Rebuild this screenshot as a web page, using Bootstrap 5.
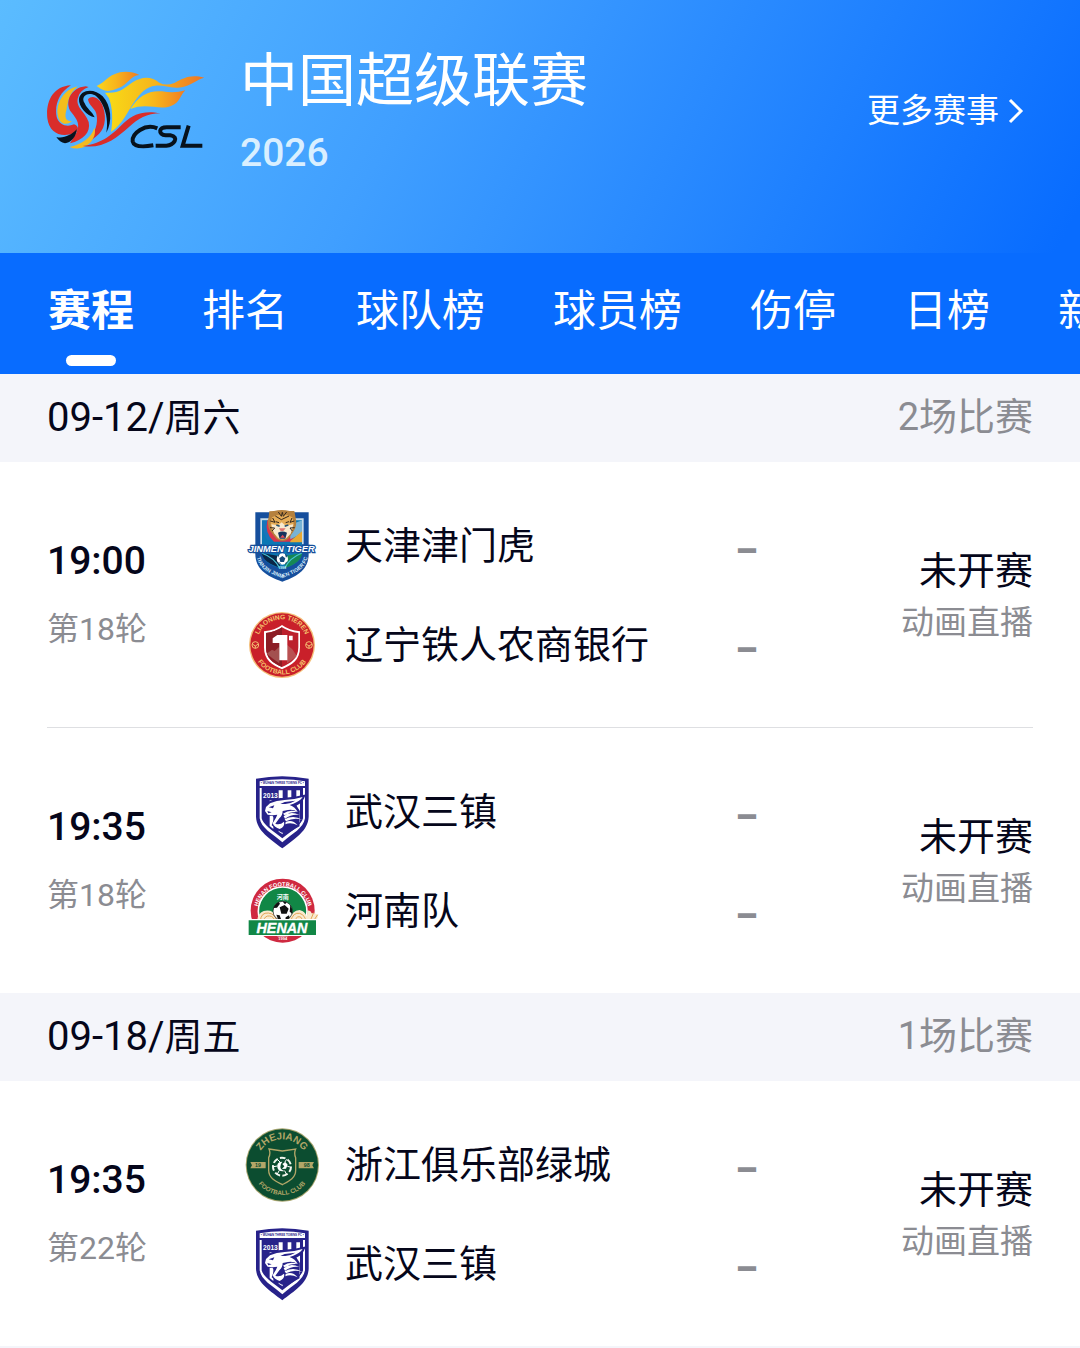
<!DOCTYPE html>
<html lang="zh-CN">
<head>
<meta charset="utf-8">
<meta name="viewport" content="width=device-width, initial-scale=1">
<title>中国超级联赛 2026 赛程</title>
<link href="https://cdn.jsdelivr.net/npm/bootstrap@5.3.0/dist/css/bootstrap.min.css" rel="stylesheet">
<style>
:root{--ink:#05061a;--soft:#8b8c92;--band:#f4f5fa;--brand:#086cff}
body{font-family:Roboto,"Noto Sans CJK SC",sans-serif;color:var(--ink);background:#fff}
a{color:inherit;text-decoration:none}
.league-head{padding:39px 56px 70px 47px;background:linear-gradient(118deg,#5bbcff 0%,#409fff 38%,#086cff 98%);color:#fff}
.league-logo{width:160px;height:82px;margin-right:33px}
.league-title{font-size:58px;line-height:84px;font-weight:400;margin:0}
.league-year{font-size:39px;line-height:60px;font-weight:500;color:#d9efff}
.more-link{font-size:33px;line-height:40px;gap:9px}
.more-link svg{width:16px;height:26px}
.tab-strip{background:var(--brand);padding:26px 47px 8px 48px;gap:68px;overflow-x:auto;scrollbar-width:none}
.tab-strip::-webkit-scrollbar{display:none}
.tab-strip a{color:#fff;font-size:43px;line-height:64px;white-space:nowrap}
.tab-strip a::after{content:"";display:block;width:50px;height:11px;border-radius:6px;margin:12px auto 0}
.tab-strip a.active{font-weight:700}
.tab-strip a.active::after{background:#fff}
.day-bar{background:var(--band);height:88px;padding:0 47px;font-size:38px;font-weight:400;margin:0}
.day-bar time{font-size:40px}
.soft{color:var(--soft)}
.matches{padding:0 47px}
.match{padding:34px 0 33px}
.match + .match{border-top:1px solid #dedfe2}
.when{width:198px;padding-bottom:6px}
.kick{font-size:39px;line-height:60px;font-weight:500}
.round-no{font-size:32px;line-height:48px;margin-top:14px}
.side{height:99px;font-size:38px;line-height:56px}
.crest{width:74px;height:76px;margin-right:26px;flex:none}
.score{width:40px;font:700 43px/48px "Noto Sans",sans-serif;color:var(--soft)}
.state{width:266px;padding-top:4px}
.state-main{font-size:38px;line-height:52px}
.state-sub{font-size:33px;line-height:52px}
.list-end{height:2px;background:var(--band)}
svg text{font-family:"Liberation Sans",sans-serif;font-weight:700}
</style>
</head>
<body>
<svg class="d-none" aria-hidden="true">
  <defs>
    <path id="arcTj" d="M80 184C86 222 116 234 156 249C198 234 226 222 234 184"/>
    <path id="arcLnTop" d="M80 134A76 76 0 0 1 232 134"/>
    <path id="arcLnBot" d="M67 134A89 89 0 0 0 245 134"/>
    <path id="arcHn" d="M82 140A77 77 0 0 1 236 140"/>
    <path id="arcZjTop" d="M79 147A77 77 0 0 1 233 147"/>
    <path id="arcZjBot" d="M66 147A90 90 0 0 0 246 147"/>
  </defs>

  <symbol id="tianjin" viewBox="45 39 222 228">
    <path d="M76 52H236V176C236 222 206 242 157 260C108 242 76 222 76 176Z" fill="#164f9d"/>
    <path d="M91 70H221V148H91Z" fill="#c7dce9"/>
    <path d="M96 76H216V166C216 200 190 212 157 222C121 212 96 200 96 166Z" fill="#0b78b5"/>
    <path d="M97 77H130L116 99L132 135H112Q98 116 97 77" fill="#1675bb"/>
    <path d="M112 76H197Q203 113 184 140H132Q103 116 112 76" fill="#d9364b"/>
    <path d="M180 90L216 76V111Q200 126 181 133Z" fill="#78b3d5"/>
    <path d="M182 137L216 109V142H180Z" fill="#e7a935"/>
    <path d="M95 174L143 182L151 218Q101 205 95 174" fill="#0a2647"/>
    <path d="M169 182L217 174Q213 204 164 219Z" fill="#168855"/>
    <path d="M95 174Q135 189 149 220M216 174Q178 189 164 220" fill="none" stroke="#48c4d9" stroke-width="4"/>
    <path d="M116 66L118 49L132 48Q155 42 179 48L193 48L196 64Q203 91 191 109L175 131Q157 145 139 131L121 109Q109 89 116 66" fill="#b5813e"/>
    <path d="M126 67Q157 48 187 67Q197 95 181 114L171 129Q157 139 142 129L131 112Q116 94 126 67" fill="#e6ad57"/>
    <path d="M124 88L145 91L155 82L167 92L190 88L182 116L166 132H148L132 115Z" fill="#f8e9ce"/>
    <path d="M145 51L154 64L157 52L160 64L170 51M136 63L154 74L177 63M121 78L135 82L128 69M193 78L180 82L186 69M120 98L134 99L126 108M194 98L180 99L187 108M137 80L147 83M177 80L167 83" stroke="#33271d" stroke-width="3" fill="none"/>
    <path d="M139 90L149 94M175 90L164 94" stroke="#245273" stroke-width="5"/>
    <path d="M147 100H167L160 108H152Z" fill="#df7470"/><path d="M144 113Q157 106 171 113L166 131H149Z" fill="#15345d"/><path d="M150 128H165L158 119Z" fill="#e34e59"/>
    <text x="155" y="172" text-anchor="middle" font-size="28" font-style="italic" fill="#fff" stroke="#154e9a" stroke-width="7" paint-order="stroke">JINMEN TIGER</text>
    <circle cx="157" cy="192" r="17" fill="#fff"/>
    <path d="M157 183L166 190L162 201H151L148 190ZM143 180L150 175L144 188ZM164 175L173 182L168 188ZM142 200L150 203L155 210ZM165 205L173 198L168 208Z" fill="#154b7c"/>
    <text x="157" y="221" text-anchor="middle" font-size="10" fill="#bfeaf0">1998</text>
    <text font-size="16" fill="#d8edfa"><textPath href="#arcTj" startOffset="50%" text-anchor="middle">TIANJIN JINMEN TIGER FC</textPath></text>
  </symbol>

  <symbol id="liaoning" viewBox="45 21 222 228">
    <circle cx="156" cy="135" r="99" fill="#f4bf79"/><circle cx="156" cy="135" r="95" fill="#c9202a"/>
    <path d="M156 75Q177 91 210 94V142C210 181 186 195 156 208C126 195 102 181 102 142V94Q136 91 156 75" fill="#fff"/>
    <path d="M156 82Q178 96 205 99V142C205 176 183 189 156 201C129 189 108 176 108 142V99Q136 96 156 82" fill="#bc202c"/>
    <path d="M108 99Q136 96 156 82V201C129 189 108 176 108 142Z" fill="#8c1d25"/>
    <path d="M110 161L126 149L134 153L148 140V190L129 176ZM171 134L187 148L201 169L171 190Z" fill="#b77a72" opacity=".55"/>
    <path d="M128 115L142 105H172V181H148V129H128ZM177 107H188V121H177Z" fill="#fff"/>
    <g fill="none" stroke="#f4bd72" stroke-width="3"><circle cx="76" cy="135" r="10"/><circle cx="237" cy="135" r="10"/><path d="M67 132L76 138L85 132M76 138V145M228 132L237 138L246 132M237 138V145"/></g>
    <text font-size="20" fill="#f6c36e"><textPath href="#arcLnTop" startOffset="50%" text-anchor="middle">LIAONING TIEREN</textPath></text>
    <text font-size="20" fill="#f6c36e"><textPath href="#arcLnBot" startOffset="50%" text-anchor="middle">FOOTBALL CLUB</textPath></text>
  </symbol>

  <symbol id="wuhan" viewBox="45 27 222 228">
    <path d="M78 41Q156 26 236 41V155C234 199 193 221 157 250C121 221 80 199 78 155Z" fill="#27228a"/>
    <path d="M89 49Q156 37 225 49V63H89Z" fill="#fff"/>
    <text x="157" y="58" text-anchor="middle" font-size="9" fill="#27228a">• WUHAN THREE TOWNS FC •</text>
    <path d="M89 69H95V160C99 178 125 196 157 220C189 196 215 178 219 160V69H225V160C220 190 188 205 157 232C126 205 94 190 89 160Z" fill="#fff"/>
    <path d="M119 76H130V192L119 183ZM146 76H158V208L146 200ZM173 76H184V194L173 202ZM199 76H210V170L199 182Z" fill="#fff"/>
    <path d="M97 75H142V106H97Z" fill="#27228a"/>
    <text x="99" y="98" font-size="20" fill="#fff">2013</text>
    <path d="M102 138L105 124L118 112Q138 102 164 101Q196 99 223 92Q217 111 196 121L207 139L206 182L178 199Q160 206 147 195L128 180L136 158L128 150L112 150Z" fill="#27228a" stroke="#27228a" stroke-width="5"/>
    <path d="M105 138L108 126L120 115Q139 106 164 105Q195 103 218 96Q210 109 190 116L179 120Q196 126 203 141Q190 132 174 135L158 138Q158 151 148 160L136 176Q150 181 162 170Q166 184 149 192Q133 188 128 175L138 158L142 149L128 151L113 149Z" fill="#fff"/>
    <path d="M116 127L133 121L129 130ZM151 117L164 111L196 107Q184 115 166 117ZM112 138L125 142L115 145Z" fill="#27228a"/>
    <path d="M161 154Q181 137 208 150Q186 146 165 161ZM164 163Q190 148 216 164Q190 157 168 169ZM167 171Q187 162 203 181Q183 171 166 178ZM159 146Q181 131 203 141Q181 139 164 151Z" fill="#fff"/>
  </symbol>

  <symbol id="henan" viewBox="45 24 222 228">
    <circle cx="158" cy="137" r="96" fill="#cf2940"/><circle cx="158" cy="139" r="73" fill="#118746" stroke="#fff" stroke-width="5"/>
    <text font-size="17" fill="#fff"><textPath href="#arcHn" startOffset="50%" text-anchor="middle">HENAN FOOTBALL CLUB</textPath></text>
    <text x="158" y="101" text-anchor="middle" font-size="18" fill="#fff" style="font-family:'Noto Sans CJK SC',sans-serif">河南</text>
    <path d="M81 168Q83 145 101 138Q126 131 141 154L145 168ZM174 168Q186 136 209 135Q230 139 235 168ZM225 168Q233 151 233 137Q242 135 245 145Q257 143 263 149Q266 160 254 168Z" fill="#f8eacf"/>
    <path d="M91 168Q93 142 115 144Q137 147 139 168M101 168Q104 151 119 153Q131 154 134 168M182 168Q190 141 209 145Q226 151 227 168M194 168Q201 150 213 157L219 168M243 162L251 143M253 164L263 149" fill="none" stroke="#e4a455" stroke-width="3"/>
    <circle cx="158" cy="138" r="29" fill="#fff" stroke="#111" stroke-width="2"/>
    <path d="M149 127L164 120L176 131L170 146H154ZM131 129Q133 119 146 111L150 116L141 128ZM157 109L171 112L165 118ZM181 120Q189 132 187 146L179 140ZM139 149L149 151L153 162L145 165ZM167 157L177 151L179 158L166 167Z" fill="#111"/>
    <path d="M53 162H262V213H53Z" fill="#fff"/><path d="M56 166H258V210H56Z" fill="#118746"/>
    <text x="156" y="203" text-anchor="middle" font-size="43" font-style="italic" fill="#fff" stroke="#fff" stroke-width="1">HENAN</text>
    <text x="158" y="226" text-anchor="middle" font-size="12" fill="#fff">1994</text>
  </symbol>

  <symbol id="zhejiang" viewBox="45 33 222 228">
    <circle cx="157" cy="147" r="110" fill="#a6a36c"/><circle cx="157" cy="147" r="107" fill="#0c4d30"/>
    <path d="M61 138H107V157H61L66 148ZM206 138H252L247 148L252 157H206Z" fill="#b2a668"/>
    <text x="84" y="154" text-anchor="middle" font-size="16" fill="#0c4d30">19</text><text x="230" y="154" text-anchor="middle" font-size="16" fill="#0c4d30">98</text>
    <path d="M117 99L157 105L197 99Q191 112 197 125V163C197 188 174 197 157 206C140 197 116 188 116 163V125Q123 112 117 99Z" fill="#0c4d30" stroke="#b2a668" stroke-width="4"/>
    <circle cx="156" cy="152" r="27" fill="none" stroke="#f3f6ed" stroke-width="6" stroke-dasharray="17 7"/>
    <path d="M157 137Q139 137 142 154Q145 169 165 165Q152 162 151 153Q150 145 157 137M157 144L166 138L173 146L168 158L156 159L163 151Z" fill="#fff"/>
    <path d="M142 130L150 138M170 130L164 139M181 153L172 151M169 174L164 164M142 174L148 163M131 152L142 150" stroke="#fff" stroke-width="3"/>
    <text font-size="30" fill="#b2a668"><textPath href="#arcZjTop" startOffset="50%" text-anchor="middle">ZHEJIANG</textPath></text>
    <text font-size="19" fill="#b2a668"><textPath href="#arcZjBot" startOffset="50%" text-anchor="middle">FOOTBALL CLUB</textPath></text>
  </symbol>
</svg>

<header class="league-head d-flex align-items-center">
  <svg class="league-logo flex-shrink-0" viewBox="51 60 480 246" role="img" aria-label="CSL">
    <defs>
      <linearGradient id="flame" x1="0" x2="1"><stop offset="0" stop-color="#fbd51a"/><stop offset=".45" stop-color="#f7b51c"/><stop offset="1" stop-color="#f07c22"/></linearGradient>
      <linearGradient id="tail" x1="0" x2="1"><stop offset="0" stop-color="#f9dc15"/><stop offset=".5" stop-color="#f5b51c"/><stop offset="1" stop-color="#ee7424"/></linearGradient>
    </defs>
    <path d="M200 108C224 99 231 77 270 67C292 63 311 67 328 75C301 76 295 104 264 115Q239 127 222 121Q212 117 200 108" fill="url(#flame)"/>
    <path d="M225 128C267 132 281 116 308 97C337 78 365 79 388 98Q407 109 433 99C464 83 481 73 523 83C501 88 489 103 462 110C424 119 407 104 376 107C349 109 330 131 316 151C292 185 280 221 243 246C249 213 248 173 237 145Z" fill="url(#tail)"/>
    <path d="M301 177C327 137 354 121 396 124Q434 131 466 121C450 135 451 158 423 168C388 182 350 157 301 177" fill="url(#flame)"/>
    <path d="M123 106C66 109 47 159 52 205C58 249 91 264 133 250C148 243 147 228 132 223C111 233 87 225 80 201C73 164 87 128 123 106" fill="#d92d2a"/>
    <path d="M144 109C103 117 78 158 83 194C87 221 107 229 126 214C107 215 103 201 109 181C115 151 117 130 144 109" fill="#f4bd1c"/>
    <path d="M167 109C122 113 102 158 124 187C143 210 151 226 139 248L120 280C160 270 183 247 176 216C166 184 133 171 145 140Q151 120 176 111Z" fill="#d92d2a"/>
    <path d="M194 202C171 198 145 169 147 147C151 117 194 114 218 139C244 167 248 215 229 248C238 202 220 154 195 136C171 124 151 141 164 160C171 177 186 184 194 202" fill="#07121d"/>
    <path d="M174 148C187 132 211 145 219 170C232 209 222 242 200 258Q185 270 178 276C194 244 206 222 199 191C194 174 176 166 174 148" fill="#d92d2a"/>
    <path d="M79 261C99 267 125 255 140 238C140 259 122 279 105 280Q89 277 79 261" fill="#07121d"/>
    <path d="M119 291C151 284 184 265 193 233C202 258 179 291 147 295Q132 297 119 291" fill="#f4ba20"/>
    <path d="M158 288C218 281 249 251 282 218C315 189 343 181 392 190C349 191 325 206 297 231C258 266 216 298 158 288" fill="#d92d2a"/>
    <g fill="none" stroke="#07121d" stroke-width="12"><path d="M382 235C345 219 305 251 308 274C312 293 341 291 370 286"/><path d="M452 232H417C383 229 384 254 407 256H421C450 261 431 286 409 287H377"/><path d="M476 227L458 287H517"/></g>
  </svg>
  <div class="flex-grow-1">
    <h1 class="league-title">中国超级联赛</h1>
    <div class="league-year">2026</div>
  </div>
  <a href="#" class="more-link d-flex align-items-center">更多赛事
    <svg viewBox="0 0 16 26" fill="none" stroke="#fff" stroke-width="3" aria-hidden="true"><path d="M2 2L13 13L2 24"/></svg>
  </a>
</header>

<nav class="tab-strip d-flex flex-nowrap" aria-label="赛事栏目">
  <a href="#" class="active" aria-current="page">赛程</a>
  <a href="#">排名</a>
  <a href="#">球队榜</a>
  <a href="#">球员榜</a>
  <a href="#">伤停</a>
  <a href="#">日榜</a>
  <a href="#">新闻</a>
</nav>

<main>
  <section>
    <h2 class="day-bar d-flex justify-content-between align-items-center"><span><time>09-12/</time>周六</span><span class="soft">2场比赛</span></h2>
    <div class="matches">
      <article class="match d-flex align-items-center">
        <div class="when"><div class="kick">19:00</div><div class="round-no soft">第18轮</div></div>
        <div class="flex-grow-1">
          <div class="side d-flex align-items-center"><svg class="crest" aria-hidden="true"><use href="#tianjin"/></svg><span class="flex-grow-1">天津津门虎</span><span class="score text-center">–</span></div>
          <div class="side d-flex align-items-center"><svg class="crest" aria-hidden="true"><use href="#liaoning"/></svg><span class="flex-grow-1">辽宁铁人农商银行</span><span class="score text-center">–</span></div>
        </div>
        <div class="state text-end"><div class="state-main">未开赛</div><div class="state-sub soft">动画直播</div></div>
      </article>
      <article class="match d-flex align-items-center">
        <div class="when"><div class="kick">19:35</div><div class="round-no soft">第18轮</div></div>
        <div class="flex-grow-1">
          <div class="side d-flex align-items-center"><svg class="crest" aria-hidden="true"><use href="#wuhan"/></svg><span class="flex-grow-1">武汉三镇</span><span class="score text-center">–</span></div>
          <div class="side d-flex align-items-center"><svg class="crest" aria-hidden="true"><use href="#henan"/></svg><span class="flex-grow-1">河南队</span><span class="score text-center">–</span></div>
        </div>
        <div class="state text-end"><div class="state-main">未开赛</div><div class="state-sub soft">动画直播</div></div>
      </article>
    </div>
  </section>
  <section>
    <h2 class="day-bar d-flex justify-content-between align-items-center"><span><time>09-18/</time>周五</span><span class="soft">1场比赛</span></h2>
    <div class="matches">
      <article class="match d-flex align-items-center">
        <div class="when"><div class="kick">19:35</div><div class="round-no soft">第22轮</div></div>
        <div class="flex-grow-1">
          <div class="side d-flex align-items-center"><svg class="crest" aria-hidden="true"><use href="#zhejiang"/></svg><span class="flex-grow-1">浙江俱乐部绿城</span><span class="score text-center">–</span></div>
          <div class="side d-flex align-items-center"><svg class="crest" aria-hidden="true"><use href="#wuhan"/></svg><span class="flex-grow-1">武汉三镇</span><span class="score text-center">–</span></div>
        </div>
        <div class="state text-end"><div class="state-main">未开赛</div><div class="state-sub soft">动画直播</div></div>
      </article>
    </div>
    <div class="list-end"></div>
  </section>
</main>
<script src="https://cdn.jsdelivr.net/npm/bootstrap@5.3.0/dist/js/bootstrap.bundle.min.js"></script>
</body>
</html>
